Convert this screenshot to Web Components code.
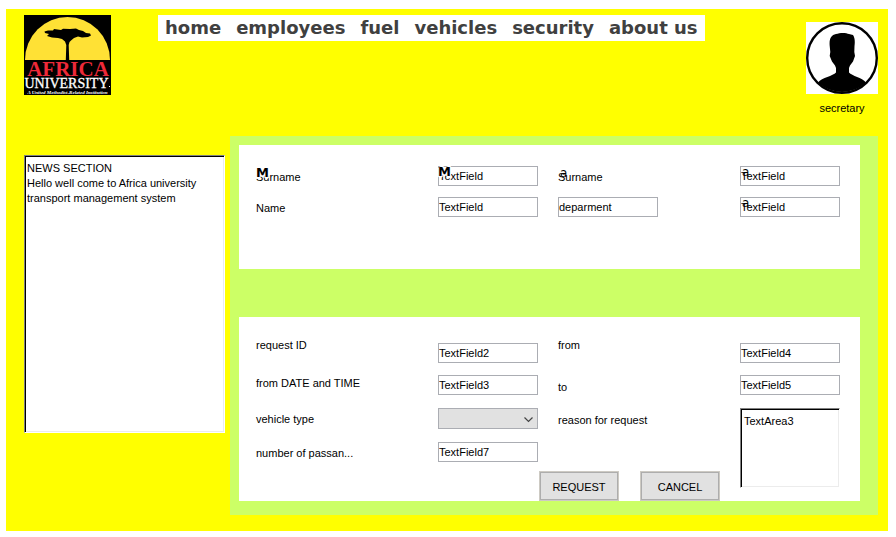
<!DOCTYPE html>
<html lang="en">
<head>
<meta charset="utf-8">
<title>Africa University Transport</title>
<style>
  body{
    margin: 0;
    padding: 9px 8px 6px 6px;
    background: #fff;
    color: #000;
    font: 11px/16px "Liberation Sans", Arial, sans-serif;
    --cor-page: #ffff00;
    --cor-panel: #ccff66;
    --cor-border: #abadb3;
    --cor-button: #e1e1e1;
  }
</style>
</head>
<body>

<transport-page>
  <au-logo slot="header"></au-logo>
  <main-menu slot="header">
    <a href="#home">home</a>
    <a href="#employees">employees</a>
    <a href="#fuel">fuel</a>
    <a href="#vehicles">vehicles</a>
    <a href="#security">security</a>
    <a href="#about">about us</a>
  </main-menu>
  <user-badge slot="header">secretary</user-badge>

  <news-box slot="side"></news-box>

  <form-card class="person">
    <text-field label="Surname" value="TextField" label-mark="M" field-mark="M"></text-field>
    <text-field label="Surname" value="TextField" label-mark="a" field-mark="a"></text-field>
    <text-field label="Name" value="TextField"></text-field>
    <text-field name="deparment" label-value="deparment" value="TextField" field-mark="a"></text-field>
  </form-card>

  <form-card class="request">
    <text-field class="tall" label="request ID" value="TextField2"></text-field>
    <text-field class="tall" label="from" value="TextField4"></text-field>
    <text-field class="upper top" label="from DATE and TIME" value="TextField3"></text-field>
    <text-field class="upper" label="to" value="TextField5"></text-field>
    <select-field label="vehicle type"></select-field>
    <area-field label="reason for request" value="TextArea3"></area-field>
    <text-field class="lower" label="number of passan..." value="TextField7"></text-field>
    <button-bar></button-bar>
  </form-card>
</transport-page>

<template id="tpl-page">
  <header><slot name="header"></slot></header>
  <main>
    <slot name="side"></slot>
    <section><slot></slot></section>
  </main>
  <style>
    :host{
      display: block;
      padding: 6px 10px 16px 18px;
      background: var(--cor-page);
    }
    header{
      display: flex;
      align-items: flex-start;
      padding-bottom: 20px;
    }
    main{
      display: grid;
      grid-template-columns: 201px 1fr;
      column-gap: 5px;
      align-items: start;
    }
    section{
      display: grid;
      row-gap: 48px;
      padding: 9px 18px 14px 9px;
      background: var(--cor-panel);
    }
  </style>
</template>

<template id="tpl-logo">
  <svg width="87" height="80" viewBox="0 0 87 80" role="img" aria-label="Africa University">
    <rect width="87" height="80" fill="#000"/>
    <path d="M1 45A42.5 43 0 0 1 86 45Z" fill="#ffe135"/>
    <path d="M20.500 16.500L24 15.500L29 15.500L30 14L37 15L39 13.800L46 14L52 13.500L55 15L59 16L62 18L66 18.500L67 20.500L64 22L58 22.500L54 21.500L50 23L47 25.500L45.500 27L44.700 30L45.200 45H41.800L42.300 30L41 26.500L38 24L34 23L28 22.500L23 21L25 19L21 18Z" fill="#000"/>
    <text x="44" y="61" class="big">AFRICA</text>
    <text x="42.500" y="73" class="mid">UNIVERSITY</text>
    <rect x="85" y="71" width="1" height="1" fill="#fff"/>
    <text x="43.5" y="79" class="tag">A United Methodist-Related Institution</text>
  </svg>
  <style>
    :host{
      display: block;
      flex: none;
      margin-right: 47px;
    }
    svg{
      display: block;
    }
    text{
      font-family: "Liberation Serif", "Times New Roman", serif;
      text-anchor: middle;
      fill: #fff;
    }
    .big{
      font-size: 21px;
      font-weight: bold;
      fill: #ed2939;
    }
    .mid{
      font-size: 14px;
      stroke: #fff;
      stroke-width: .3px;
    }
    .tag{
      font-size: 5px;
      font-style: italic;
      font-weight: bold;
    }
  </style>
</template>

<template id="tpl-menu">
  <nav><slot></slot></nav>
  <style>
    :host{
      display: block;
      background: #fff;
    }
    nav{
      display: flex;
      flex-wrap: wrap;
      column-gap: 15px;
      padding: 0 7px;
    }
    ::slotted(a){
      color: #404040;
      font: bold 18px/26px "DejaVu Sans", Verdana, sans-serif;
      text-decoration: none;
    }
  </style>
</template>

<template id="tpl-user">
  <svg width="72" height="72" viewBox="0 0 72 72" aria-hidden="true">
    <rect width="72" height="72" fill="#fff"/>
    <circle cx="36" cy="36" r="34.800" fill="none" stroke="#000" stroke-width="2.400"/>
    <path d="M30 12C34 10.500 40 10.500 43 12L47 13C49 16 49 20 48.500 24L48.300 30L49 34L47 39.500L44 43.500L43 46V50.500C46 54 56 55.500 60 60.500A35 35 0 0 1 12 60.500C16 55.500 27 54 30 50.500V46L29 43.500L26 39.500L23.700 34L24.300 30L23.700 24C23 17 25 13 30 12Z" fill="#000"/>
  </svg>
  <slot></slot>
  <style>
    :host{
      display: flex;
      flex-direction: column;
      align-items: center;
      row-gap: 6px;
      margin: 7px 0 0 auto;
    }
    svg{
      display: block;
    }
  </style>
</template>

<template id="tpl-news">
  <textarea aria-label="News"></textarea>
  <style>
    :host{
      display: block;
      margin-top: 19px;
    }
    textarea{
      display: block;
      box-sizing: border-box;
      width: 100%;
      height: 278px;
      margin: 0;
      padding: 5px 2px;
      border: 1px solid;
      border-color: #808080 #fff #fff #808080;
      box-shadow: inset 1px 1px #000, inset -1px -1px #ececec;
      border-radius: 0;
      background: #fff;
      color: inherit;
      font: inherit;
      line-height: 15px;
      resize: none;
      overflow: hidden;
    }
  </style>
</template>

<template id="tpl-card">
  <slot></slot>
  <style>
    :host{
      display: grid;
      grid-template-columns: 1fr 100px 1fr 100px;
      column-gap: 20px;
      background: #fff;
    }
    :host(.person){
      grid-auto-rows: 20px;
      row-gap: 11px;
      padding: 21px 20px 52px 17px;
    }
    :host(.request){
      grid-template-rows: 26px 21px 21px 21px 27px;
      row-gap: 12px;
      padding: 20px 20px 0 17px;
    }
  </style>
</template>

<template id="tpl-text-field">
  <div class="caption"></div>
  <div class="field"><input type="text" id="value"></div>
  <style>
    :host{
      display: contents;
    }
    div{
      position: relative;
      align-self: center;
    }
    :host(.tall) .caption,
    :host(.top) .caption,
    :host(.upper) .field{
      align-self: start;
    }
    :host(.tall) .field,
    :host(.lower) .field{
      align-self: end;
    }
    label{
      display: block;
      padding-top: 2px;
    }
    :host(.tall) label,
    :host(.top) label{
      padding-top: 0;
    }
    input{
      display: block;
      box-sizing: border-box;
      width: 100px;
      height: 20px;
      margin: 0;
      padding: 0;
      border: 1px solid var(--cor-border);
      border-radius: 0;
      background: #fff;
      color: inherit;
      font: inherit;
    }
    /* mnemonic letters drawn over the start of the text */
    .mark{
      position: absolute;
      top: 0;
      left: 0;
      font: bold 13px/12px "DejaVu Sans", Verdana, sans-serif;
      text-shadow: 1px 1px #fff, -1px 1px #fff, 1px -1px #fff, 0 2px #fff;
      pointer-events: none;
    }
    .mark.small{
      left: 2px;
      font: 12px/12px "DejaVu Sans", Verdana, sans-serif;
      text-shadow: none;
    }
  </style>
</template>

<template id="tpl-select-field">
  <label for="value"></label>
  <div>
    <select id="value"><option></option></select>
    <svg width="9" height="6" viewBox="0 0 9 6" aria-hidden="true">
      <path d="M.5 .5L4.500 4.500L8.500 .5" fill="none" stroke="#444" stroke-width="1.200"/>
    </svg>
  </div>
  <style>
    :host{
      display: contents;
    }
    label{
      align-self: center;
    }
    div{
      position: relative;
    }
    select{
      display: block;
      box-sizing: border-box;
      width: 100%;
      height: 21px;
      margin: 0;
      border: 1px solid var(--cor-border);
      border-radius: 0;
      background: var(--cor-button);
      font: inherit;
      appearance: none;
    }
    svg{
      position: absolute;
      top: 9px;
      right: 5px;
      pointer-events: none;
    }
  </style>
</template>

<template id="tpl-area-field">
  <label for="value"></label>
  <textarea id="value"></textarea>
  <style>
    :host{
      display: contents;
    }
    label{
      align-self: center;
      padding-top: 2px;
    }
    textarea{
      grid-column: 4;
      grid-row: 3 / 6;
      box-sizing: border-box;
      width: 100px;
      height: 80px;
      margin: 0;
      padding: 5px 3px;
      border: 1px solid;
      border-color: #808080 #fff #fff #808080;
      box-shadow: inset 1px 1px #000, inset -1px -1px #ececec;
      border-radius: 0;
      background: #fff;
      color: inherit;
      font: inherit;
      line-height: 15px;
      resize: none;
      overflow: hidden;
    }
  </style>
</template>

<template id="tpl-buttons">
  <button type="button">REQUEST</button>
  <button type="button">CANCEL</button>
  <style>
    :host{
      display: flex;
      grid-column: 2 / 4;
      grid-row: 5;
      align-self: end;
      justify-content: flex-end;
      column-gap: 21px;
    }
    button{
      box-sizing: border-box;
      width: 80px;
      height: 30px;
      margin: 0;
      padding: 2px 0 0;
      border: 1px solid #cdcac3;
      border-radius: 0;
      box-shadow: inset 0 0 0 1px #adadad;
      background: var(--cor-button);
      color: inherit;
      font: inherit;
    }
  </style>
</template>

<script>
  class BaseElement extends HTMLElement{
    constructor( tpl ){
      super()
      const el = document.querySelector(tpl).content.cloneNode(true)
      this.attachShadow({mode:'open'}).appendChild( el )
    }
  }

  class TransportPage extends BaseElement{
    constructor(){ super('#tpl-page') }
  }

  class AuLogo extends BaseElement{
    constructor(){ super('#tpl-logo') }
  }

  class MainMenu extends BaseElement{
    constructor(){ super('#tpl-menu') }
  }

  class UserBadge extends BaseElement{
    constructor(){ super('#tpl-user') }
  }

  class NewsBox extends BaseElement{
    constructor(){
      super('#tpl-news')
      this.shadowRoot.querySelector('textarea').value =
        'NEWS SECTION\nHello well come to Africa university transport management system'
    }
  }

  class FormCard extends BaseElement{
    constructor(){ super('#tpl-card') }
  }

  class TextField extends BaseElement{
    constructor(){
      super('#tpl-text-field')
      this.caption = this.shadowRoot.querySelector('.caption')
      this.field = this.shadowRoot.querySelector('.field')
      this.input = this.shadowRoot.querySelector('#value')
    }

    connectedCallback(){
      this.input.value = this.getAttribute('value')

      if (this.hasAttribute('label')) {
        const label = document.createElement('label')
        label.htmlFor = 'value'
        label.textContent = this.getAttribute('label')
        this.caption.appendChild(label)
      } else {
        // the caption itself can be edited
        const input = document.createElement('input')
        input.type = 'text'
        input.value = this.getAttribute('label-value')
        input.setAttribute('aria-label', this.getAttribute('name'))
        this.input.setAttribute('aria-label', this.getAttribute('name') + ' value')
        this.caption.appendChild(input)
      }
      this.addMark(this.caption, this.getAttribute('label-mark'))
      this.addMark(this.field, this.getAttribute('field-mark'))
    }

    addMark( parent, text ){
      if (!text) return
      const mark = document.createElement('span')
      mark.className = text === 'a' ? 'mark small' : 'mark'
      mark.textContent = text
      parent.appendChild(mark)
    }
  }

  class SelectField extends BaseElement{
    constructor(){ super('#tpl-select-field') }

    connectedCallback(){
      this.shadowRoot.querySelector('label').textContent = this.getAttribute('label')
    }
  }

  class AreaField extends BaseElement{
    constructor(){ super('#tpl-area-field') }

    connectedCallback(){
      this.shadowRoot.querySelector('label').textContent = this.getAttribute('label')
      this.shadowRoot.querySelector('textarea').value = this.getAttribute('value')
    }
  }

  class ButtonBar extends BaseElement{
    constructor(){ super('#tpl-buttons') }
  }

  customElements.define('transport-page', TransportPage)
  customElements.define('au-logo', AuLogo)
  customElements.define('main-menu', MainMenu)
  customElements.define('user-badge', UserBadge)
  customElements.define('news-box', NewsBox)
  customElements.define('form-card', FormCard)
  customElements.define('text-field', TextField)
  customElements.define('select-field', SelectField)
  customElements.define('area-field', AreaField)
  customElements.define('button-bar', ButtonBar)
</script>
</body>
</html>
